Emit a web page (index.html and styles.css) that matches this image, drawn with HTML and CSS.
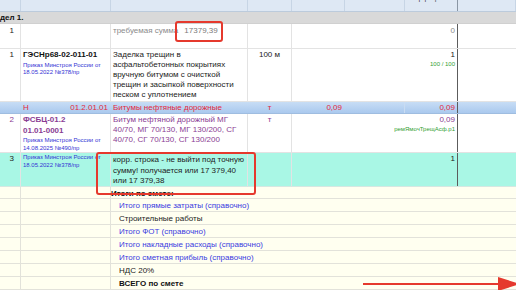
FILE: index.html
```html
<!DOCTYPE html>
<html>
    <head>
        <title>Смета</title>
        <link rel="stylesheet" href="styles.css">
    </head>
    <body>
        <div class="Sheet">
            <div class="Row Head">
                <div></div><div></div><div></div><div></div><div></div><div></div>
                <div><div class="HeadCaption">коэффициенты</div></div>
                <div></div>
            </div>
            <div class="Row Section"><div>дел 1.</div></div>
            <div class="Row Plain Sum">
                <div class="Num">1</div>
                <div></div>
                <div class="Muted">требуемая сумма <span class="SumValue">17379,39</span></div>
                <div></div><div></div><div></div>
                <div class="Value Split Muted">0</div>
                <div></div>
            </div>
            <div class="Row Plain Work">
                <div class="Num">1</div>
                <div>
                    <div class="Code">ГЭСНр68-02-011-01</div>
                    <div class="Order">Приказ Минстроя России от<br>18.05.2022 №378/пр</div>
                </div>
                <div class="Text">Заделка трещин в<br>асфальтобетонных покрытиях<br>вручную битумом с очисткой<br>трещин и засыпкой поверхности<br>песком с уплотнением</div>
                <div class="Unit">100 м</div>
                <div></div><div></div>
                <div class="Value Split">
                    <div>1</div>
                    <div class="Note">100 / 100</div>
                </div>
                <div></div>
            </div>
            <div class="Row Resource">
                <div></div>
                <div class="Pair"><span>Н</span><span>01.2.01.01</span></div>
                <div class="Text">Битумы нефтяные дорожные</div>
                <div class="Unit">т</div>
                <div class="Value">0,09</div>
                <div></div>
                <div class="Value Split">0,09</div>
                <div></div>
            </div>
            <div class="Row Plain Material">
                <div class="Num">2</div>
                <div>
                    <div class="Code">ФСБЦ-01.2<br>01.01-0001</div>
                    <div class="Order">Приказ Минстроя России от<br>14.08.2025 №490/пр</div>
                </div>
                <div class="Text">Битум нефтяной дорожный МГ<br>40/70, МГ 70/130, МГ 130/200, СГ<br>40/70, СГ 70/130, СГ 130/200</div>
                <div class="Unit">т</div>
                <div></div><div></div>
                <div class="Value Split">
                    <div>0,09</div>
                    <div class="Note">ремЯмочТрещАсф.р1</div>
                </div>
                <div></div>
            </div>
            <div class="Row Plain Fix">
                <div class="Num">3</div>
                <div><div class="Order">Приказ Минстроя России от<br>18.05.2022 №378/пр</div></div>
                <div class="Text">корр. строка - не выйти под точную<br>сумму! получается или 17 379,40<br>или 17 379,38</div>
                <div></div><div></div><div></div>
                <div class="Value Split">1</div>
                <div></div>
            </div>
            <div class="Row Total Caption"><div></div><div></div><div>Итоги по смете:</div></div>
            <div class="Row Total Link"><div></div><div></div><div>Итого прямые затраты (справочно)</div></div>
            <div class="Row Total"><div></div><div></div><div>Строительные работы</div></div>
            <div class="Row Total Link"><div></div><div></div><div>Итого ФОТ (справочно)</div></div>
            <div class="Row Total Link"><div></div><div></div><div>Итого накладные расходы (справочно)</div></div>
            <div class="Row Total Link"><div></div><div></div><div>Итого сметная прибыль (справочно)</div></div>
            <div class="Row Total"><div></div><div></div><div>НДС 20%</div></div>
            <div class="Row Total Grand"><div></div><div></div><div>ВСЕГО по смете</div></div>

            <div class="Mark MarkSum"></div>
            <div class="Mark MarkFix"></div>
            <svg class="Arrow" width="160" height="16" viewBox="0 0 160 16">
                <line x1="3" y1="8" x2="142" y2="8" stroke="#e5392d" stroke-width="2"/>
                <polygon points="138,1 160,8 138,15" fill="#e5392d"/>
            </svg>
        </div>
    </body>
</html>
```
FILE: styles.css
```css
* { box-sizing: border-box; }
body { margin: 0; width: 516px; height: 290px; overflow: hidden; background: #fffff2; color: #222; font-family: "Liberation Sans", Arial, sans-serif; font-size: 8px; line-height: 10px; }

.Sheet { position: relative; width: 516px; }

/* one row = one grid, columns shared by all rows */
.Row { display: grid; grid-template-columns: 21px 90px 137px 44px 53px 60px 53px 58px; border-bottom: 1px solid #e3e3e3; }
.Row > div { padding: 1px 2px 0; border-right: 1px solid #e3e3e3; overflow: hidden; white-space: nowrap; }

.Head { height: 12px; background: #dee8f4; border-bottom-color: #bccbdc; }
.Head > div { border-right-color: #c7d5e5; padding: 0; }
.Head > div:nth-child(7) { border-right-color: #8a96a4; }
.HeadCaption { margin-top: -6px; font-size: 7px; line-height: 8px; text-align: center; color: #333; }

.Section { display: block; height: 12px; background: #d9d9d9; border-bottom-color: #d0d0d0; }
.Section > div { padding: 0; border: none; font-weight: bold; line-height: 11px; color: #111; }

.Plain { background: #fff; }
.Plain > div:nth-child(5), .Plain > div:nth-child(6), .Plain > div:nth-child(8) { border-right-color: transparent; }
.Split { border-right: 1px solid #5c5c5c !important; }

.Sum { height: 25px; }
.Sum > div { padding-top: 2px; }
.Work { height: 53px; }
.Material { height: 39px; color: #8a3c93; }
.Fix { height: 34px; background: #a9f7e5; border-bottom-color: #d6e8e2; }
.Fix > div:nth-child(3) { padding-top: 2px; line-height: 10.5px; }

.Num { text-align: right; padding-right: 6px !important; }
.Muted { color: #8b8b8b; }
.SumValue { margin-left: 4px; color: #7a7a7a; }
.Code { font-weight: bold; line-height: 10.5px; }
.Work .Code { color: #111; }
.Order { margin-top: 1px; font-size: 6px; line-height: 7.5px; color: #3434d4; }
.Fix .Order { margin-top: 0; }
.Unit { text-align: center; }
.Value { text-align: right; }
.Value.Split { display: flex; flex-direction: column; align-items: flex-end; overflow: visible; }
.Note { font-size: 6px; line-height: 9px; color: #33a033; }

.Resource { height: 12px; background: linear-gradient(#c7ddf5, #aac9ee); color: #e3283c; border-bottom-color: #9fbde0; }
.Resource > div { border-right-color: transparent; padding-top: 1px; }
.Resource > div:nth-child(6) { border-right-color: #c9dcf2; }
.Pair { display: flex; justify-content: space-between; }

.Total { height: 13px; background: #fffff0; border-bottom-color: #e2e2da; grid-template-columns: 21px 90px 1fr; }
.Total > div { border-right-color: #e2e2da; padding: 1px 0 0; line-height: 11px; }
.Total > div:nth-child(3) { border-right: none; padding-left: 8px; }
.Total.Caption { height: 12px; font-weight: bold; color: #111; }
.Total.Caption > div:nth-child(3) { padding-left: 0; }
.Total.Grand { font-weight: bold; color: #111; }
.Link { color: #3b3be0; }

/* red annotations drawn over the sheet */
.Mark { position: absolute; border: 2px solid #e5392d; border-radius: 3px; }
.MarkSum { left: 175px; top: 21px; width: 48px; height: 21px; }
.MarkFix { left: 96px; top: 152px; width: 160px; height: 43px; }
.Arrow { position: absolute; left: 360px; top: 276px; }
```
